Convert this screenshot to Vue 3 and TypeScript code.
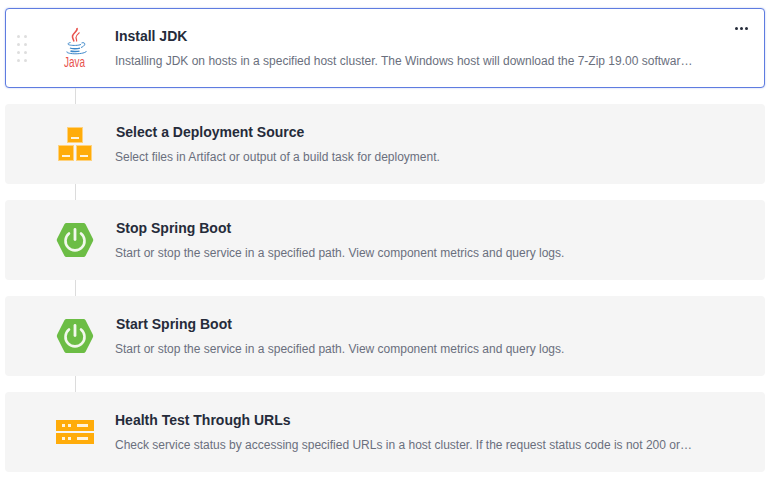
<script setup lang="ts">
interface Step { title: string; desc: string; icon: string; selected?: boolean; shift?: boolean }
const steps: Step[] = [
  { title: 'Install JDK', desc: 'Installing JDK on hosts in a specified host cluster. The Windows host will download the 7-Zip 19.00 software package to decompress the JDK installation package.', icon: 'java', selected: true },
  { title: 'Select a Deployment Source', desc: 'Select files in Artifact or output of a build task for deployment.', icon: 'boxes', shift: true },
  { title: 'Stop Spring Boot', desc: 'Start or stop the service in a specified path. View component metrics and query logs.', icon: 'spring', shift: true },
  { title: 'Start Spring Boot', desc: 'Start or stop the service in a specified path. View component metrics and query logs.', icon: 'spring', shift: true },
  { title: 'Health Test Through URLs', desc: 'Check service status by accessing specified URLs in a host cluster. If the request status code is not 200 or the response times out, the health test fails.', icon: 'server' }
]
</script>

<template>
  <div class="list">
    <div v-for="s in steps" :key="s.title" class="card" :class="{ selected: s.selected }">
      <div v-if="s.selected" class="grip">
        <i v-for="n in 8" :key="n"></i>
      </div>
      <div class="icon" :class="'icon-' + s.icon">
        <svg v-if="s.icon === 'java'" width="40" height="42" viewBox="0 0 40 42">
          <path d="M21 1c1.200 3-4 5-4.500 8-.3 2 1 3.500 1.500 5.500" fill="none" stroke="#e8534e" stroke-width="1.600"/>
          <path d="M23.500 5.500c-2 1.800-3.500 3-3.500 5 0 1.500 1 2 .5 4" fill="none" stroke="#e8534e" stroke-width="1.200"/>
          <path d="M14.500 15.500c-2 .4-2.500 1-2.500 1.500 0 1.100 4 1.500 7.500 1.400 2.500-.1 4.500-.4 5.500-1" fill="none" stroke="#3d87c9" stroke-width="1"/>
          <path d="M14 21c1.500.8 7 1 10 .1M14.500 24c1.500.6 6.500.8 9 .1" fill="none" stroke="#3d87c9" stroke-width="1.400"/>
          <path d="M25.500 16c2-.8 3.500 0 3.300 1.300-.3 1.400-2.200 2.700-3.800 3.200" fill="none" stroke="#3d87c9" stroke-width="1"/>
          <path d="M11 24.500c-1.500 1 3 2.400 9 2.300 5-.1 10-1 10.500-2.800" fill="none" stroke="#3d87c9" stroke-width="1"/>
          <text x="18.500" y="40" text-anchor="middle" textLength="21" lengthAdjust="spacingAndGlyphs" class="java">Java</text>
        </svg>
        <svg v-else-if="s.icon === 'boxes'" width="34" height="34" viewBox="0 0 34 34">
          <g fill="#ffac0a" stroke="#ffd27d" stroke-width="1">
            <rect x="9.500" y=".5" width="15" height="15"/>
            <rect x=".5" y="18.500" width="15" height="15"/>
            <rect x="18.500" y="18.500" width="15" height="15"/>
          </g>
          <g fill="#fff3dc">
            <rect x="13" y="10" width="8" height="2"/>
            <rect x="4" y="28" width="8" height="2"/>
            <rect x="22" y="28" width="8" height="2"/>
          </g>
        </svg>
        <svg v-else-if="s.icon === 'spring'" width="38" height="36" viewBox="0 0 38 36">
          <path d="M10.500 1h17a2.500 2.500 0 0 1 2.100 1.200l7.200 14.300a3 3 0 0 1 0 3l-7.200 14.300a2.500 2.500 0 0 1-2.100 1.200h-17a2.500 2.500 0 0 1-2.100-1.200L1.200 19.500a3 3 0 0 1 0-3L8.400 2.200A2.500 2.500 0 0 1 10.500 1z" fill="#6cbd45"/>
          <path d="M13 11.500a9.500 9.500 0 1 0 12 0" fill="none" stroke="#f2f8ec" stroke-width="2.600" stroke-linecap="round"/>
          <path d="M19 7.500v10" fill="none" stroke="#f2f8ec" stroke-width="2.800" stroke-linecap="round"/>
        </svg>
        <svg v-else width="38" height="24" viewBox="0 0 38 24">
          <rect width="38" height="11" fill="#ffac0a"/>
          <rect y="13" width="38" height="11" fill="#ffac0a"/>
          <g fill="#fff3dc">
            <rect x="6" y="4" width="3" height="3"/><rect x="12" y="4" width="3" height="3"/><rect x="21" y="4" width="11" height="3"/>
            <rect x="6" y="17" width="3" height="3"/><rect x="12" y="17" width="3" height="3"/><rect x="21" y="17" width="11" height="3"/>
          </g>
        </svg>
      </div>
      <div class="text">
        <div class="title" :class="{ shifted: s.shift }">{{ s.title }}</div>
        <div class="desc">{{ s.desc }}</div>
      </div>
      <div v-if="s.selected" class="more"><b></b><b></b><b></b></div>
    </div>
  </div>
</template>

<style scoped>
.list {
  display: flex;
  flex-direction: column;
  gap: 16px;
  width: 760px;
  padding: 8px 0 0 5px;
  font-family: "Liberation Sans", Arial, sans-serif;
}
.card {
  position: relative;
  box-sizing: border-box;
  height: 80px;
  display: flex;
  align-items: center;
  padding: 0 71px 0 0;
  background: #f5f5f5;
  border-radius: 4px;
}
.card + .card::before {
  content: "";
  position: absolute;
  left: 70px;
  top: -16px;
  width: 1px;
  height: 16px;
  background: #dcdcdc;
}
.card.selected {
  background: #fff;
  border: 1px solid #5e7ce0;
  box-shadow: 0 0 2px rgba(94, 124, 224, 0.45);
  padding-right: 70px;
}
.grip {
  position: absolute;
  left: 11px;
  top: 26px;
  display: grid;
  grid-template-columns: 3px 3px;
  column-gap: 4px;
  row-gap: 5px;
}
.grip i {
  width: 3px;
  height: 3px;
  border-radius: 50%;
  background: #dedede;
}
.icon {
  flex: 0 0 110px;
  width: 110px;
  padding-left: 50px;
  box-sizing: border-box;
  display: flex;
  align-items: center;
  height: 40px;
}
.icon-java { flex-basis: 109px; width: 109px; }
.icon-boxes { padding-left: 53px; }
.icon-spring { padding-left: 51px; }
.icon-server { padding-left: 51px; }
.java {
  font-family: "Liberation Sans", Arial, sans-serif;
  font-size: 14px;
  fill: #e8534e;
}
.text {
  min-width: 0;
  flex: 1;
  display: flex;
  flex-direction: column;
  gap: 9px;
}
.title {
  font-size: 14px;
  font-weight: 700;
  line-height: 16px;
  color: #252b3a;
}
.title.shifted { margin-left: 1px; }
.desc {
  font-size: 12px;
  line-height: 16px;
  color: #6a6f7d;
  white-space: nowrap;
  overflow: hidden;
  text-overflow: ellipsis;
}
.more {
  position: absolute;
  right: 16px;
  top: 18px;
  display: flex;
  gap: 2px;
}
.more b {
  width: 3px;
  height: 3px;
  border-radius: 50%;
  background: #252b3a;
}
</style>
